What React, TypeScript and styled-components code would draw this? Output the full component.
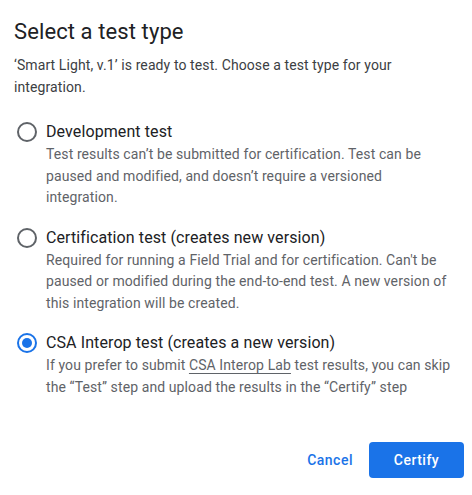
import React, { useState } from "react";
import styled, { createGlobalStyle } from "styled-components";

const GlobalStyle = createGlobalStyle`
  body {
    margin: 0;
    background: #fff;
    font-family: Roboto, "Liberation Sans", Arial, sans-serif;
    color: #202124;
  }
`;

const Dialog = styled.div`
  width: 472px;
  height: 495px;
  box-sizing: border-box;
  padding: 18px 18px 0 14px;
  display: flex;
  flex-direction: column;
`;

const Title = styled.h1`
  margin: 0;
  font-size: 22px;
  line-height: 28px;
  font-weight: 400;
  color: #202124;
  letter-spacing: 0.1px;
`;

const Intro = styled.p`
  margin: 9px 0 0;
  font-size: 14px;
  line-height: 21.5px;
  color: #3c4043;
  letter-spacing: 0.1px;
`;

const OptionList = styled.div`
  margin-top: 22px;
  display: flex;
  flex-direction: column;
  gap: 17px;
`;

const Option = styled.label`
  display: grid;
  grid-template-columns: 20px 1fr;
  column-gap: 9px;
  padding-left: 3px;
  cursor: pointer;
`;

const Radio = styled.span<{ $checked: boolean }>`
  width: 20px;
  height: 20px;
  box-sizing: border-box;
  margin-top: 2px;
  border-radius: 50%;
  border: 2px solid ${(p) => (p.$checked ? "#1a73e8" : "#5f6368")};
  display: flex;
  align-items: center;
  justify-content: center;

  &::after {
    content: "";
    width: 10px;
    height: 10px;
    border-radius: 50%;
    background: #1a73e8;
    display: ${(p) => (p.$checked ? "block" : "none")};
  }
`;

const Label = styled.span`
  font-size: 16px;
  line-height: 24px;
  color: #202124;
  letter-spacing: 0.1px;
`;

const Description = styled.span`
  grid-column: 2;
  font-size: 14px;
  line-height: 21.5px;
  color: #5f6368;
  letter-spacing: 0.1px;
`;

const TextLink = styled.a`
  color: inherit;
  text-decoration: underline;
  text-underline-offset: 3px;
`;

const Actions = styled.div`
  margin: auto -10px 17px 0;
  display: flex;
  justify-content: flex-end;
  align-items: center;
  gap: 8px;
`;

const Button = styled.button<{ $primary?: boolean }>`
  height: 36px;
  border: none;
  border-radius: 4px;
  padding: 0 ${(p) => (p.$primary ? "24px" : "8px")};
  min-width: ${(p) => (p.$primary ? "95px" : "0")};
  font-family: Roboto, "Liberation Sans", Arial, sans-serif;
  font-size: 14px;
  font-weight: 500;
  letter-spacing: 0.5px;
  background: ${(p) => (p.$primary ? "#1a73e8" : "transparent")};
  color: ${(p) => (p.$primary ? "#fff" : "#1a73e8")};
  cursor: pointer;
`;

const options = [
  {
    id: "dev",
    label: "Development test",
    desc: (
      <>
        Test results can’t be submitted for certification. Test can be paused and
        modified, and doesn’t require a versioned integration.
      </>
    ),
  },
  {
    id: "cert",
    label: "Certification test (creates new version)",
    desc: (
      <>
        Required for running a Field Trial and for certification. Can't be paused
        or modified during the end-to-end test. A new version of this integration
        will be created.
      </>
    ),
  },
  {
    id: "csa",
    label: "CSA Interop test (creates a new version)",
    desc: (
      <>
        If you prefer to submit <TextLink href="#">CSA Interop Lab</TextLink> test
        results, you can skip the “Test” step and upload the results in the
        “Certify” step
      </>
    ),
  },
];

export default function App() {
  const [selected, setSelected] = useState("csa");
  return (
    <>
      <GlobalStyle />
      <Dialog>
        <Title>Select a test type</Title>
        <Intro>
          ‘Smart Light, v.1’ is ready to test. Choose a test type for your
          integration.
        </Intro>
        <OptionList>
          {options.map((o) => (
            <Option key={o.id} onClick={() => setSelected(o.id)}>
              <Radio $checked={selected === o.id} />
              <Label>{o.label}</Label>
              <Description>{o.desc}</Description>
            </Option>
          ))}
        </OptionList>
        <Actions>
          <Button>Cancel</Button>
          <Button $primary>Certify</Button>
        </Actions>
      </Dialog>
    </>
  );
}
